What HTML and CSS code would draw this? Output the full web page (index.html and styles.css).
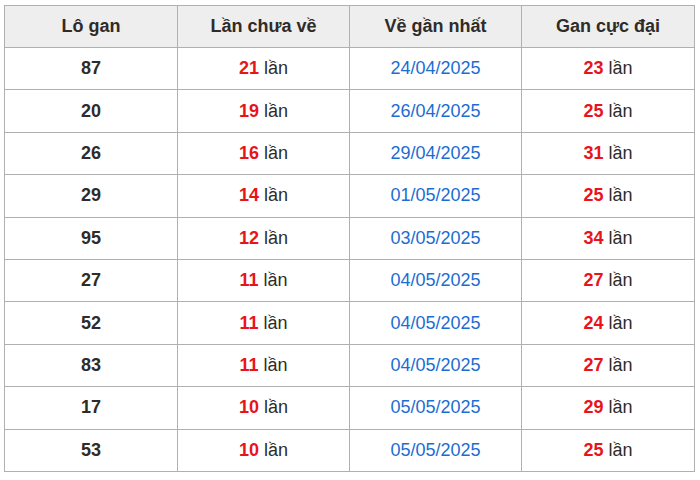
FILE: index.html
```html
<!DOCTYPE html>
<html>
<head>
<meta charset="utf-8">
<link rel="stylesheet" href="styles.css">
</head>
<body>
<table class="gan">
<thead>
<tr><th>Lô gan</th><th>Lần chưa về</th><th>Về gần nhất</th><th>Gan cực đại</th></tr>
</thead>
<tbody>
<tr><td class="num">87</td><td><b class="red">21</b> lần</td><td class="date">24/04/2025</td><td><b class="red">23</b> lần</td></tr>
<tr><td class="num">20</td><td><b class="red">19</b> lần</td><td class="date">26/04/2025</td><td><b class="red">25</b> lần</td></tr>
<tr><td class="num">26</td><td><b class="red">16</b> lần</td><td class="date">29/04/2025</td><td><b class="red">31</b> lần</td></tr>
<tr><td class="num">29</td><td><b class="red">14</b> lần</td><td class="date">01/05/2025</td><td><b class="red">25</b> lần</td></tr>
<tr><td class="num">95</td><td><b class="red">12</b> lần</td><td class="date">03/05/2025</td><td><b class="red">34</b> lần</td></tr>
<tr><td class="num">27</td><td><b class="red">11</b> lần</td><td class="date">04/05/2025</td><td><b class="red">27</b> lần</td></tr>
<tr><td class="num">52</td><td><b class="red">11</b> lần</td><td class="date">04/05/2025</td><td><b class="red">24</b> lần</td></tr>
<tr><td class="num">83</td><td><b class="red">11</b> lần</td><td class="date">04/05/2025</td><td><b class="red">27</b> lần</td></tr>
<tr><td class="num">17</td><td><b class="red">10</b> lần</td><td class="date">05/05/2025</td><td><b class="red">29</b> lần</td></tr>
<tr><td class="num">53</td><td><b class="red">10</b> lần</td><td class="date">05/05/2025</td><td><b class="red">25</b> lần</td></tr>
</tbody>
</table>
</body>
</html>
```

FILE: styles.css
```css
html, body {
  margin: 0;
  padding: 0;
  background: #fff;
}
body {
  padding: 5px 0 0 4px;
  font-family: "Liberation Sans", Arial, sans-serif;
  color: #333;
}
.gan {
  border-collapse: collapse;
  width: 691px;
  table-layout: fixed;
  font-size: 18px;
}
.gan th, .gan td {
  border: 1px solid #b0b0b0;
  text-align: center;
  padding: 0;
}
.gan th {
  height: 41px;
  background: #eeeeee;
  font-weight: bold;
  color: #2e2b28;
}
.gan td {
  height: 41.4px;
  color: #2e2b28;
}
.gan th:nth-child(1) { width: 172px; }
.gan th:nth-child(2) { width: 171px; }
.gan th:nth-child(3) { width: 171px; }
.gan td.num { font-weight: bold; }
.gan .red { color: #e8141c; font-weight: bold; }
.gan td.date { color: #1b6dd3; }
```
